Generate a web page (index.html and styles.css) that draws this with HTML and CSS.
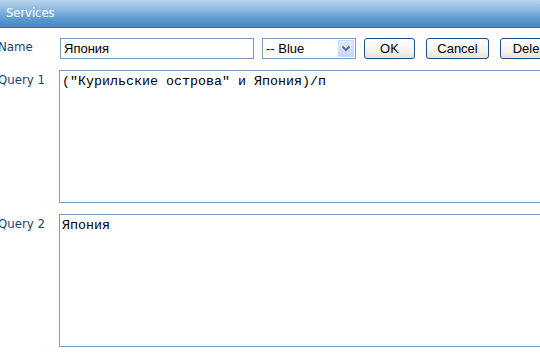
FILE: index.html
```html
<!DOCTYPE html>
<html>
<head>
<meta charset="utf-8">
<link rel="stylesheet" href="styles.css">
</head>
<body>
<div class="titlebar">Services</div>
<div class="form">
  <div class="label label-name">Name</div>
  <div class="controls">
    <input class="name-input" type="text" value="Япония">
    <div class="select"><span class="select-text">-- Blue</span><span class="select-arrow"><svg width="10" height="7" viewBox="0 0 10 7"><path d="M1.5 1.5 L5 5 L8.5 1.5" fill="none" stroke="#5a6f95" stroke-width="2"/></svg></span></div>
    <button class="btn btn-ok">OK</button>
    <button class="btn btn-cancel">Cancel</button>
    <button class="btn btn-delete">Delete</button>
  </div>
  <div class="label label-q">Query 1</div>
  <textarea class="query">("Курильские острова" и Япония)/п</textarea>
  <div class="label label-q">Query 2</div>
  <textarea class="query">Япония</textarea>
</div>
</body>
</html>
```
FILE: styles.css
```css
html, body {
  margin: 0;
  padding: 0;
  background: #ffffff;
  overflow: hidden;
  width: 540px;
  height: 360px;
}
body {
  font-family: "DejaVu Sans", Verdana, sans-serif;
}
.titlebar {
  height: 27px;
  border-bottom: 1px solid #2f6ea8;
  background: linear-gradient(to bottom, #b9d6ee 0%, #8dbbe0 35%, #5d9bd0 70%, #4687c4 100%);
  color: #ffffff;
  font-size: 11.5px;
  line-height: 27px;
  padding-left: 6px;
}
.form {
  display: grid;
  grid-template-columns: 62px 600px;
  row-gap: 11px;
  margin-left: -2px;
  padding-top: 9px;
}
.label {
  color: #1d3f73;
  font-size: 11.8px;
}
.label-name {
  padding-top: 3px;
}
.label-q {
  padding-top: 3px;
}
.controls {
  display: flex;
  align-items: center;
  height: 22px;
}
.name-input {
  box-sizing: border-box;
  width: 194px;
  height: 21px;
  margin: 1px 0 0 0;
  border: 1px solid #7f9db9;
  padding: 0 3px;
  font-family: "Liberation Sans", Arial, sans-serif;
  font-size: 13px;
  color: #000;
  outline: none;
}
.select {
  box-sizing: border-box;
  width: 94px;
  height: 21px;
  margin: 1px 0 0 8px;
  border: 1px solid #7f9db9;
  display: flex;
  align-items: center;
  justify-content: space-between;
  padding: 1px 1px 1px 3px;
  font-family: "Liberation Sans", Arial, sans-serif;
  font-size: 13px;
  color: #000;
}
.select-arrow {
  box-sizing: border-box;
  width: 16px;
  height: 17px;
  background: linear-gradient(to bottom, #e2ebfd 0%, #c6d6fb 100%);
  border: 1px solid #cbd9fd;
  display: flex;
  align-items: center;
  justify-content: center;
}
.select-arrow svg {
  display: block;
}
.btn {
  box-sizing: border-box;
  height: 21px;
  margin: 0;
  border: 1px solid #1b4f86;
  border-radius: 3px;
  background: linear-gradient(to bottom, #ffffff 0%, #f5f4ee 60%, #e6e3d6 100%);
  font-family: "Liberation Sans", Arial, sans-serif;
  font-size: 13px;
  color: #000;
  padding: 0;
}
.btn-ok {
  width: 51px;
  margin-left: 8px;
}
.btn-cancel {
  width: 63px;
  margin-left: 11px;
}
.btn-delete {
  width: 63px;
  margin-left: 11px;
}
.query {
  box-sizing: border-box;
  width: 600px;
  height: 133px;
  margin: 0 0 0 -1px;
  border: 1px solid #7f9db9;
  padding: 3px 2px;
  font-family: "Liberation Mono", "Courier New", monospace;
  font-size: 13.33px;
  line-height: 15px;
  color: #000;
  resize: none;
  outline: none;
}
```
